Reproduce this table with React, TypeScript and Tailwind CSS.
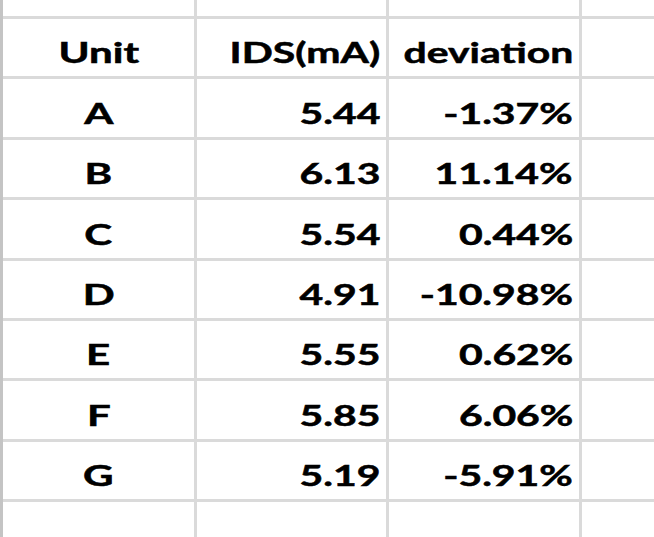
import React from 'react';

const data = [
    ['A', '5.44', '-1.37%'],
    ['B', '6.13', '11.14%'],
    ['C', '5.54', '0.44%'],
    ['D', '4.91', '-10.98%'],
    ['E', '5.55', '0.62%'],
    ['F', '5.85', '6.06%'],
    ['G', '5.19', '-5.91%'],
];

function Cell({ children, align = 'right' }: { children?: React.ReactNode; align?: 'center' | 'right' }) {
    return (
        <div
            className={
                align === 'center'
                    ? 'bg-white flex items-end justify-center pb-[10px]'
                    : 'bg-white flex items-end justify-end pb-[10px] pr-[6px]'
            }
        >
            <span
                className={
                    align === 'center'
                        ? 'inline-block leading-[28px] text-[28px] font-bold text-black scale-x-[1.5] origin-center [-webkit-text-stroke:0.5px_black]'
                        : 'inline-block leading-[28px] text-[28px] font-bold text-black scale-x-[1.46] origin-right [-webkit-text-stroke:0.5px_black]'
                }
            >
                {children}
            </span>
        </div>
    );
}

export default function App() {
    return (
        <div
            className="w-[654px] h-[537px] overflow-hidden bg-[#dadada] border-l-[3px] border-[#c4c4c4] grid grid-cols-[191px_189px_190px_1fr] grid-rows-[16px_repeat(8,57.375px)_1fr] gap-[3px]"
            style={{ fontFamily: 'Lato, "Open Sans", sans-serif' }}
        >
            {/* top partial row */}
            <div className="bg-white" />
            <div className="bg-white" />
            <div className="bg-white" />
            <div className="bg-white" />

            {/* header */}
            <Cell align="center">Unit</Cell>
            <Cell>IDS(mA)</Cell>
            <Cell>deviation</Cell>
            <div className="bg-white" />

            {data.map(([unit, ids, dev]) => (
                <React.Fragment key={unit}>
                    <Cell align="center">{unit}</Cell>
                    <Cell>{ids}</Cell>
                    <Cell>{dev}</Cell>
                    <div className="bg-white" />
                </React.Fragment>
            ))}

            {/* bottom partial row */}
            <div className="bg-white" />
            <div className="bg-white" />
            <div className="bg-white" />
            <div className="bg-white" />
        </div>
    );
}
